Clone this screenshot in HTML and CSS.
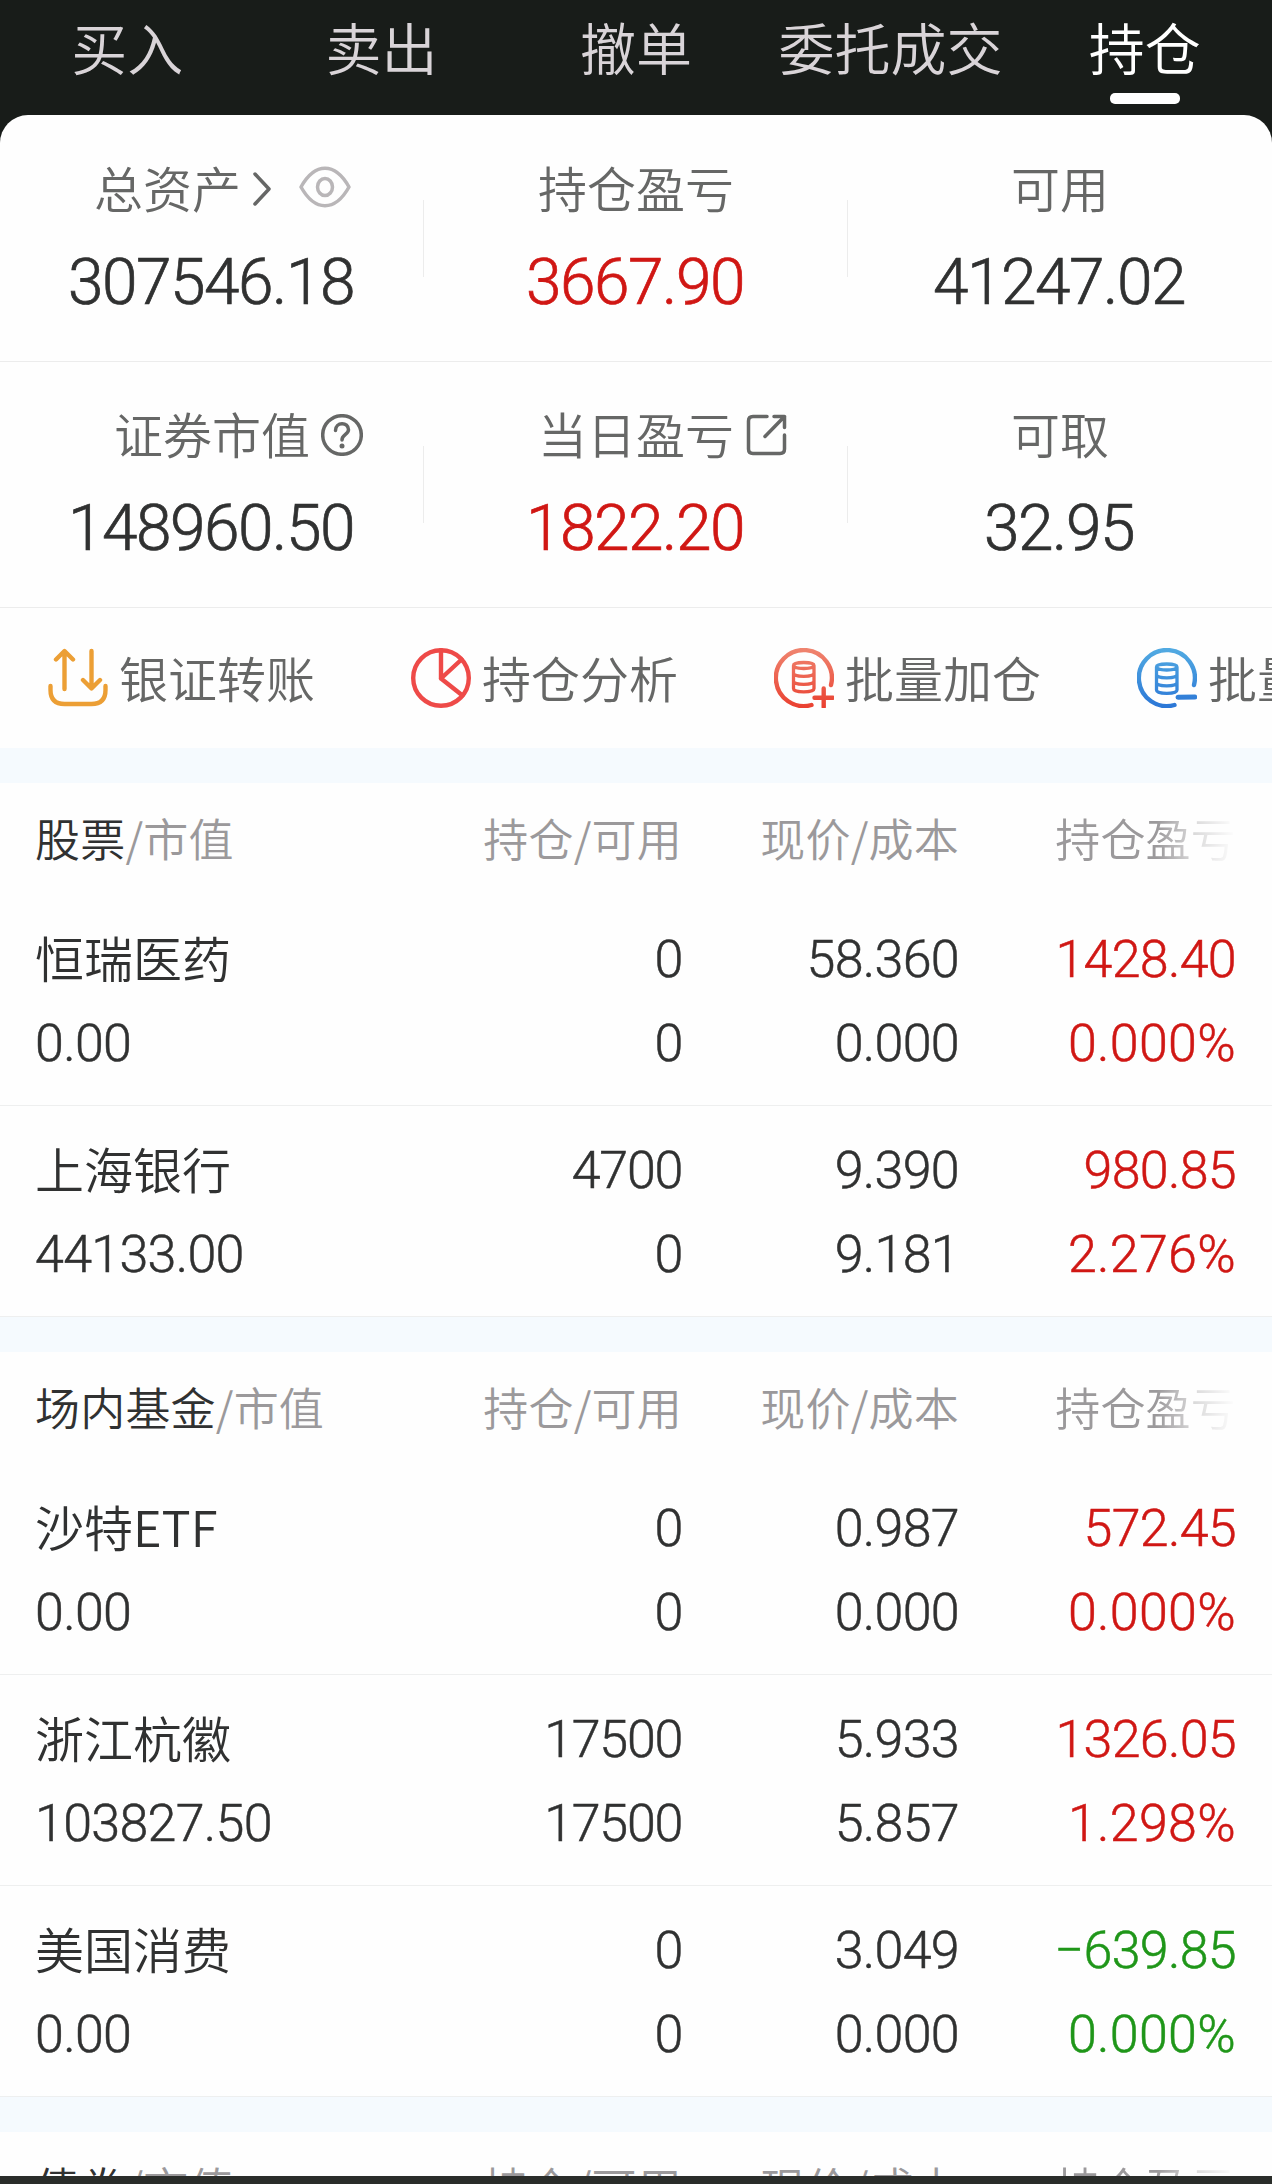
FILE: index.html
```html
<!DOCTYPE html>
<html lang="zh-CN">

<head>
    <meta charset="UTF-8">
    <meta name="viewport" content="width=device-width, initial-scale=1.0">
    <title>持仓</title>
    <link rel="stylesheet" href="styles.css">
</head>

<body>
<div class="page">
    <nav class="tabs">
        <a class="tab">买入</a>
        <a class="tab">卖出</a>
        <a class="tab">撤单</a>
        <a class="tab">委托成交</a>
        <a class="tab active">持仓</a>
    </nav>

    <main class="card">
        <!-- 资产汇总 -->
        <div class="summary first">
            <div class="cell">
                <div class="label total">总资产
                    <svg class="arrow" viewBox="0 0 18 34"><path d="M2 2 16 17 2 32"/></svg>
                    <svg class="eye" viewBox="0 0 52 42"><path d="M2 21C16-4 36-4 50 21C36 46 16 46 2 21Z"/><ellipse cx="26" cy="21" rx="7.500" ry="8.500"/></svg>
                </div>
                <div class="value">307546.18</div>
            </div>
            <div class="cell">
                <div class="label">持仓盈亏</div>
                <div class="value up">3667.90</div>
            </div>
            <div class="cell">
                <div class="label">可用</div>
                <div class="value">41247.02</div>
            </div>
        </div>
        <div class="summary">
            <div class="cell">
                <div class="label">证券市值
                    <svg class="tip" viewBox="0 0 42 42"><circle cx="21" cy="21" r="19.3"/><path d="M14.5 16.5C14.5 7.5 27.5 7.500 27.500 15.800C27.500 20.500 21 20.500 21 26"/><circle class="dot" cx="21" cy="32" r="2.500"/></svg>
                </div>
                <div class="value">148960.50</div>
            </div>
            <div class="cell">
                <div class="label">当日盈亏
                    <svg class="tip" viewBox="0 0 42 42"><path d="M22 2.500H8Q3.500 2.500 3.500 7V35Q3.500 39.500 8 39.500H35Q39.500 39.500 39.500 35V21M29 2.500H39.500V13.500M39.500 2.500 20 22.500"/></svg>
                </div>
                <div class="value up">1822.20</div>
            </div>
            <div class="cell">
                <div class="label">可取</div>
                <div class="value">32.95</div>
            </div>
        </div>

        <!-- 快捷入口 -->
        <div class="tools">
            <div class="tool">
                <svg class="orange" viewBox="0 0 60 60"><path d="M16.500 41V3.500M8 11.500 16.500 3 25 11.500M43.500 3V40M35 32 43.500 40.500 52 32M2.500 38V42Q2.500 56 16.500 56H43.500Q57.500 56 57.500 42V38"/></svg>
                <span>银证转账</span>
            </div>
            <div class="tool">
                <svg class="red" viewBox="0 0 60 60"><circle cx="30" cy="30" r="27.800"/><path d="M30 2V30.500L50.500 11.500M30 30.500 51.500 47.500"/></svg>
                <span>持仓分析</span>
            </div>
            <div class="tool">
                <svg viewBox="0 0 60 60">
                    <defs>
                        <linearGradient id="add" gradientUnits="userSpaceOnUse" x1="0" y1="0" x2="0" y2="60">
                            <stop offset="0" stop-color="#ef8570"/>
                            <stop offset="1" stop-color="#ea4030"/>
                        </linearGradient>
                    </defs>
                    <g stroke="url(#add)">
                        <path d="M57 37A28 28 0 1 0 37.500 57"/>
                        <path d="M49.700 40.500V59M40.500 49.700H59"/>
                        <path class="thin" d="M19.500 17.500V40.500C19.500 45 40 45 40 40.500V17.500M19.500 17.500C19.500 13.500 40 13.500 40 17.500C40 21.500 19.500 21.500 19.500 17.500M19.500 25C19.500 29.500 40 29.500 40 25M19.500 33C19.500 37.500 40 37.500 40 33"/>
                    </g>
                </svg>
                <span>批量加仓</span>
            </div>
            <div class="tool">
                <svg viewBox="0 0 60 60">
                    <defs>
                        <linearGradient id="cut" gradientUnits="userSpaceOnUse" x1="0" y1="0" x2="0" y2="60">
                            <stop offset="0" stop-color="#52abe2"/>
                            <stop offset="1" stop-color="#2b76d6"/>
                        </linearGradient>
                    </defs>
                    <g stroke="url(#cut)">
                        <path d="M57 37A28 28 0 1 0 37.500 57"/>
                        <path class="minus" d="M41 49.200 57.800 49.100"/>
                        <path class="thin" d="M19.500 19V42C19.500 46.500 40 46.500 40 42V19M19.500 19C19.500 15 40 15 40 19C40 23 19.500 23 19.500 19M19.500 26.500C19.500 31 40 31 40 26.500M19.500 34.500C19.500 39 40 39 40 34.500"/>
                    </g>
                </svg>
                <span>批量减仓</span>
            </div>
        </div>

        <!-- 持仓列表 -->
        <section class="group">
            <div class="row head">
                <div><b>股票</b>/市值</div>
                <div>持仓/可用</div>
                <div>现价/成本</div>
                <div class="fade">持仓盈亏</div>
            </div>
            <div class="row">
                <div><p class="name">恒瑞医药</p><p>0.00</p></div>
                <div class="count"><p>0</p><p>0</p></div>
                <div><p>58.360</p><p>0.000</p></div>
                <div class="up"><p>1428.40</p><p class="rate">0.000%</p></div>
            </div>
            <div class="row">
                <div><p class="name">上海银行</p><p>44133.00</p></div>
                <div class="count"><p>4700</p><p>0</p></div>
                <div><p>9.390</p><p>9.181</p></div>
                <div class="up"><p>980.85</p><p class="rate">2.276%</p></div>
            </div>
        </section>

        <section class="group">
            <div class="row head">
                <div><b>场内基金</b>/市值</div>
                <div>持仓/可用</div>
                <div>现价/成本</div>
                <div class="fade">持仓盈亏</div>
            </div>
            <div class="row">
                <div><p class="name">沙特ETF</p><p>0.00</p></div>
                <div class="count"><p>0</p><p>0</p></div>
                <div><p>0.987</p><p>0.000</p></div>
                <div class="up"><p>572.45</p><p class="rate">0.000%</p></div>
            </div>
            <div class="row">
                <div><p class="name">浙江杭徽</p><p>103827.50</p></div>
                <div class="count"><p>17500</p><p>17500</p></div>
                <div><p>5.933</p><p>5.857</p></div>
                <div class="up"><p>1326.05</p><p class="rate">1.298%</p></div>
            </div>
            <div class="row">
                <div><p class="name">美国消费</p><p>0.00</p></div>
                <div class="count"><p>0</p><p>0</p></div>
                <div><p>3.049</p><p>0.000</p></div>
                <div class="down"><p>−639.85</p><p class="rate">0.000%</p></div>
            </div>
        </section>

        <section class="group">
            <div class="row head">
                <div><b>债券</b>/市值</div>
                <div>持仓/可用</div>
                <div>现价/成本</div>
                <div class="fade">持仓盈亏</div>
            </div>
        </section>
    </main>
    <div class="bottom"></div>
</div>
</body>

</html>
```

FILE: styles.css
```css
* {
    margin: 0;
    padding: 0;
    box-sizing: border-box;
}

body {
    background: #181c19;
    color: #303131;
    font-family: "Noto Sans CJK SC", sans-serif;
    font-weight: 350;
}

.page {
    display: flex;
    flex-direction: column;
    width: 1272px;
    height: 2184px;
    overflow: hidden;
}

svg {
    flex: none;
    fill: none;
    stroke-linecap: round;
    stroke-linejoin: round;
}

/* 顶部导航 */
.tabs {
    flex: none;
    display: grid;
    grid-template-columns: repeat(5, 1fr);
    height: 115px;
}

.tab {
    display: flex;
    flex-direction: column;
    align-items: center;
    color: #d9d4d8;
    font-size: 56px;
    line-height: 91px;
    white-space: nowrap;
}

.tab.active {
    color: #fff;
}

.tab.active::after {
    content: "";
    width: 70px;
    height: 11px;
    margin-top: 2px;
    border-radius: 5px;
    background: #fff;
}

.card {
    flex: 1;
    min-height: 0;
    overflow: hidden;
    border-radius: 28px 28px 0 0;
    background: #fefefe;
}

/* 资产汇总 */
.summary {
    display: grid;
    grid-template-columns: repeat(3, 1fr);
    height: 246px;
    padding-top: 36px;
    border-bottom: 1px solid #ececec;
}

.summary.first {
    height: 247px;
    padding-top: 37px;
}

.cell {
    background: linear-gradient(#ececec, #ececec) no-repeat right 48px / 1px 77px;
}

.cell:last-child {
    background: none;
}

.label {
    display: flex;
    align-items: center;
    justify-content: center;
    height: 70px;
    color: #666766;
    font-size: 49px;
    line-height: 70px;
    white-space: nowrap;
}

.label.total {
    justify-content: flex-start;
    padding-left: 94px;
}

.label svg {
    margin-top: 4px;
    stroke: #666766;
    stroke-width: 3.500;
}

.label .arrow {
    width: 18px;
    height: 34px;
    margin-left: 12px;
}

.label .eye {
    width: 52px;
    height: 42px;
    margin-top: 0;
    margin-left: 28px;
    stroke: #b9b6b8;
}

.label .tip {
    width: 42px;
    height: 42px;
    margin-left: 11px;
    margin-right: -53px;
}

.label .dot {
    fill: #666766;
    stroke: none;
}

.value {
    margin-top: 17px;
    padding-right: 2px;
    font-family: Roboto, sans-serif;
    font-size: 64px;
    font-weight: 300;
    line-height: 88px;
    letter-spacing: -1.500px;
    text-align: center;
    -webkit-text-stroke: 0.700px;
}

.up {
    color: #d01714;
}

.down {
    color: #1f9619;
}

/* 快捷入口 */
.tools {
    display: flex;
    height: 140px;
    overflow: hidden;
}

.tool {
    flex: none;
    display: flex;
    align-items: center;
    gap: 12px;
    width: 363px;
    padding-left: 48px;
    color: #666766;
    font-size: 49px;
    white-space: nowrap;
}

.tool span {
    margin-left: -1px;
    padding-bottom: 4px;
}

.tool svg {
    width: 60px;
    height: 60px;
    stroke-width: 4.400;
}

.tool .orange {
    stroke: #ec9f35;
}

.tool .red {
    stroke: #ee4a48;
}

.tool .thin {
    stroke-width: 3.300;
}

.tool .minus {
    stroke-width: 5;
}

/* 持仓列表 */
.group {
    border-top: 35px solid #f5fafe;
}

.row {
    display: grid;
    grid-template-columns: 383px 264px 277px 277px;
    height: 211px;
    padding: 23px 0 0 35px;
    border-bottom: 1px solid #eeefef;
    font-family: Roboto, "Noto Sans CJK SC", sans-serif;
    font-size: 52px;
    font-weight: 300;
    line-height: 84px;
    letter-spacing: -0.700px;
    text-align: right;
    white-space: nowrap;
    -webkit-text-stroke: 0.500px;
}

.row div:first-child {
    text-align: left;
}

.row .count {
    letter-spacing: -1.300px;
}

.row .rate {
    letter-spacing: 0.300px;
}

.row .name {
    margin-bottom: 6px;
    font-family: "Noto Sans CJK SC", sans-serif;
    font-size: 49px;
    font-weight: 350;
    line-height: 78px;
    letter-spacing: 0;
    -webkit-text-stroke: 0;
}

.row.head {
    height: 112px;
    padding-top: 20px;
    border-bottom: none;
    color: #9b999b;
    font-family: "Noto Sans CJK SC", sans-serif;
    font-size: 45px;
    font-weight: 350;
    line-height: 70px;
    letter-spacing: 0.200px;
    -webkit-text-stroke: 0;
}

.row.head b {
    color: #303131;
    font-weight: 350;
}

.row .fade {
    padding-left: 1px;
    text-align: right;
    -webkit-mask-image: linear-gradient(to right, #000 198px, rgba(0, 0, 0, .35) 236px, transparent 277px);
    mask-image: linear-gradient(to right, #000 198px, rgba(0, 0, 0, .35) 236px, transparent 277px);
}

.bottom {
    flex: none;
    height: 8px;
    background: #2a2d2a;
}
```
